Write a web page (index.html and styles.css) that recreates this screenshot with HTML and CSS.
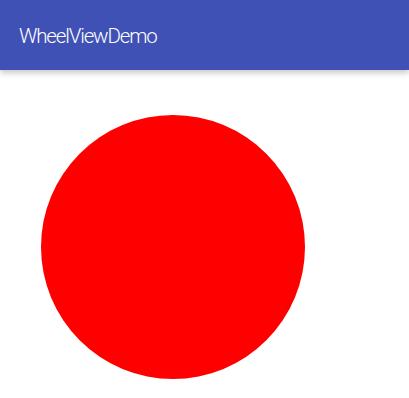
FILE: index.html
```html
<!DOCTYPE html>
<html lang="en">
<head>
    <meta charset="UTF-8">
    <meta name="viewport" content="width=device-width, initial-scale=1.0">
    <title>WheelViewDemo</title>
    <link rel="stylesheet" href="styles.css">
</head>
<body>

    <div class="toolbar">
        <h1>WheelViewDemo</h1>
    </div>

    <div class="content">
        <!-- La roue -->
        <div class="wheel"></div>
    </div>

</body>
</html>
```

FILE: styles.css
```css
/* Styles généraux */
body {
    font-family: Roboto, "Noto Sans", sans-serif;
    background: #ffffff;
    margin: 0;
    padding: 0;
    overflow: hidden;
}

.toolbar {
    height: 70px;
    background-color: #3f51b5;
    display: flex;
    align-items: center;
    padding-left: 19px;
    box-shadow: 0 3px 6px rgba(0, 0, 0, 0.22);
    position: relative;
    z-index: 1;
}

h1 {
    margin: 0;
    font-size: 20.5px;
    font-weight: 300;
    color: #ffffff;
    letter-spacing: -1.15px;
    padding-top: 1px;
}

.content {
    padding-top: 45px;
    padding-left: 41px;
}

.wheel {
    width: 264px;
    height: 264px;
    border-radius: 50%;
    background-color: #ff0000;
}
```
